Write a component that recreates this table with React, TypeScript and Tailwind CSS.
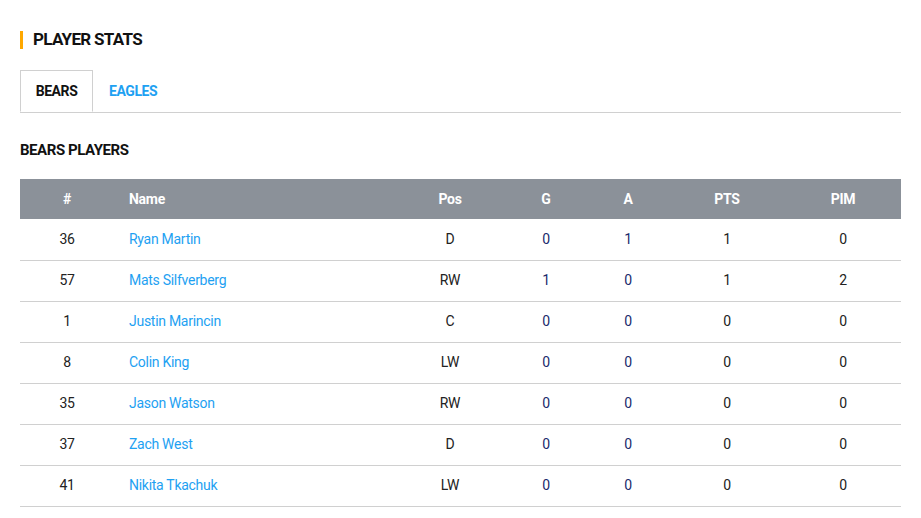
const PLAYERS = [
  { num: 36, name: 'Ryan Martin', pos: 'D', g: 0, a: 1, pts: 1, pim: 0 },
  { num: 57, name: 'Mats Silfverberg', pos: 'RW', g: 1, a: 0, pts: 1, pim: 2 },
  { num: 1, name: 'Justin Marincin', pos: 'C', g: 0, a: 0, pts: 0, pim: 0 },
  { num: 8, name: 'Colin King', pos: 'LW', g: 0, a: 0, pts: 0, pim: 0 },
  { num: 35, name: 'Jason Watson', pos: 'RW', g: 0, a: 0, pts: 0, pim: 0 },
  { num: 37, name: 'Zach West', pos: 'D', g: 0, a: 0, pts: 0, pim: 0 },
  { num: 41, name: 'Nikita Tkachuk', pos: 'LW', g: 0, a: 0, pts: 0, pim: 0 },
];

export default function App() {
  return (
    <div className="w-[921px] h-[518px] bg-white px-5 pt-[31px] font-['Roboto',sans-serif] text-[#222]">
      {/* heading */}
      <div className="flex items-center h-[18px]">
        <div className="w-[3px] h-[18px] bg-[#ffa800]" />
        <h2 className="ml-[10px] text-[17px] font-bold uppercase tracking-[-0.04em] text-[#111]">Player Stats</h2>
      </div>

      {/* tabs */}
      <div className="flex mt-[21px] border-b border-[#d0d0d0]">
        <button className="w-[73px] h-[42px] -mb-px border border-b-white border-[#d0d0d0] bg-white text-[14px] font-bold tracking-[-0.03em] text-[#111]">
          BEARS
        </button>
        <button className="px-4 h-[42px] text-[14px] font-bold tracking-[-0.03em] text-[#1ea1f2]">
          EAGLES
        </button>
      </div>

      <h3 className="mt-[28px] text-[15px] font-bold uppercase tracking-[-0.03em] text-[#111] leading-[18px]">Bears Players</h3>

      <table className="mt-[20px] w-[881px] table-fixed border-collapse text-[14px] tracking-[-0.02em]">
        <colgroup>
          <col className="w-[94px]" />
          <col className="w-[281px]" />
          <col className="w-[110px]" />
          <col className="w-[82px]" />
          <col className="w-[82px]" />
          <col className="w-[116px]" />
          <col className="w-[116px]" />
        </colgroup>
        <thead>
          <tr className="h-[40px] bg-[#8b9199] text-white font-bold">
            <th className="text-center">#</th>
            <th className="text-left pl-[15px]">Name</th>
            <th className="text-center">Pos</th>
            <th className="text-center">G</th>
            <th className="text-center">A</th>
            <th className="text-center">PTS</th>
            <th className="text-center">PIM</th>
          </tr>
        </thead>
        <tbody>
          {PLAYERS.map((p) => (
            <tr key={p.num} className="h-[41px] border-b border-[#d0d0d0]">
              <td className="text-center">{p.num}</td>
              <td className="text-left pl-[15px] text-[#1ea1f2]">{p.name}</td>
              <td className="text-center">{p.pos}</td>
              <td className="text-center text-[#1a2a6c]">{p.g}</td>
              <td className="text-center text-[#1a2a6c]">{p.a}</td>
              <td className="text-center">{p.pts}</td>
              <td className="text-center">{p.pim}</td>
            </tr>
          ))}
        </tbody>
      </table>
    </div>
  );
}
